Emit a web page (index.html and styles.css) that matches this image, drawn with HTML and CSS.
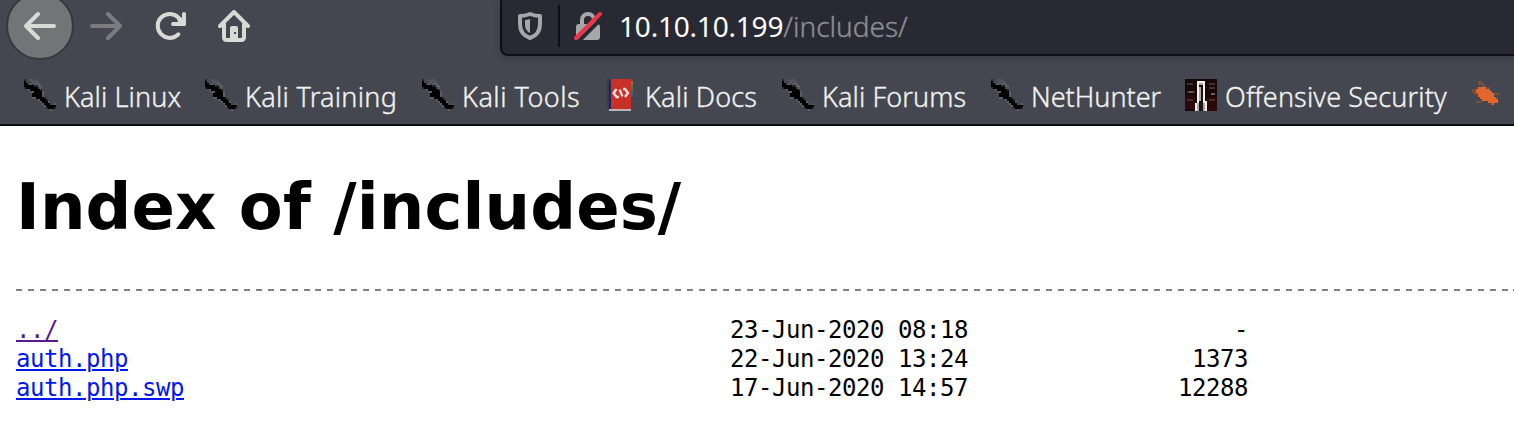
FILE: index.html
```html
<!DOCTYPE html>
<html lang="en">
<head>
<meta charset="utf-8">
<title>Index of /includes/</title>
<link rel="stylesheet" href="styles.css">
</head>
<body>
<svg class="defs" width="0" height="0" aria-hidden="true">
  <symbol id="kali" viewBox="0 0 16 16" shape-rendering="crispEdges">
    <path fill="#5a5d64" d="M3 0h1v1h-1zM5 0h1v1h-1zM4 1h1v1h-1zM6 1h1v1h-1zM3 2h1v1h-1zM5 2h3v1h-3zM7 3h2v1h-2zM8 4h1v1h-1zM2 5h1v1h-1zM3 6h2v1h-2zM9 6h1v3h-1zM4 9h2v1h-2zM7 10h1v1h-1zM8 11h1v1h-1zM9 12h1v1h-1zM10 13h1v1h-1zM12 11h1v1h-1zM15 12h1v1h-1zM13 15h1v1h-1z"/>
    <path fill="#26272b" d="M0 0h1v1h-1zM0 4h1v1h-1zM5 3h2v1h-2zM8 5h1v1h-1zM10 9h1v1h-1zM11 10h1v1h-1zM11 14h1v1h-1zM15 14h1v1h-1z"/>
    <path fill="#000" d="M0 1h1v1h-1zM0 2h2v1h-2zM0 3h5v1h-5zM1 4h6v1h-6zM3 5h5v1h-5zM5 6h4v1h-4zM4 7h5v1h-5zM4 8h5v1h-5zM6 9h4v1h-4zM8 10h3v1h-3zM9 11h3v1h-3zM10 12h3v1h-3zM11 13h5v1h-5zM12 14h3v1h-3z"/>
  </symbol>
</svg>
<header class="browser">
  <div class="toolbar">
    <div class="back"><svg width="32" height="32" viewBox="0 0 32 32"><path d="M30 16H2M14 4L2 16l12 12"/></svg></div>
    <svg class="forward" width="32" height="32" viewBox="0 0 32 32"><path d="M2 16h28M18 4l12 12-12 12"/></svg>
    <svg class="reload" width="32" height="32" viewBox="0 0 32 32"><path d="M24.3 24.3A12 12 0 1 1 24.8 8"/><path class="solid" d="M28 4a2 2 0 0 1 4 0V14.5a1.5 1.5 0 0 1-1.5 1.5H19a2 2 0 0 1 0-4H24l-1-3 2-3 3 2z"/></svg>
    <svg class="home" width="32" height="32" viewBox="0 0 32 32"><path d="M2 16L16 2l14 14M6 14v13q0 3 3 3h14q3 0 3-3V14"/><path class="solid" fill-rule="evenodd" d="M12 30V18q0-2 2-2h4q2 0 2 2v12zM16 22v2h2v-2z"/></svg>
    <div class="urlbar">
      <svg class="shield" width="24" height="28" viewBox="0 0 24 28"><path d="M12 2Q17 4 22 4V12C22 19 18 24 12 26C6 24 2 19 2 12V4Q7 4 12 2Z"/><path class="solid" d="M12 7v14C8 19 7 15 7 12V8Q10 8 12 7Z"/></svg>
      <span class="divider"></span>
      <svg class="lock" width="28" height="28" viewBox="0 0 28 28"><path class="shackle" d="M8 14V8a6 6 0 0 1 12 0v6"/><rect class="case" x="2" y="12" width="24" height="16" rx="3"/><path class="gap" d="M5 29L29 5"/><path class="slash" d="M2 26L26 2"/></svg>
      <span class="url"><span class="host">10.10.10.199</span><span class="path">/includes/</span></span>
    </div>
  </div>
  <nav class="bookmarks">
    <span class="bm linux"><svg width="32" height="32"><use href="#kali"/></svg><span>Kali Linux</span></span>
    <span class="bm training"><svg width="32" height="32"><use href="#kali"/></svg><span>Kali Training</span></span>
    <span class="bm tools"><svg width="32" height="32"><use href="#kali"/></svg><span>Kali Tools</span></span>
    <span class="bm docs"><svg width="32" height="32" viewBox="0 0 16 16" shape-rendering="crispEdges"><path fill="#3b3751" d="M1 0h2v15h-2z"/><path fill="#17295c" d="M2 1h1v14h-1z"/><path fill="#c83028" d="M3 0h10v15h-10z"/><path fill="#b9b4b5" d="M2 15h11v1h-11z"/><path fill="#a66a35" d="M13 1h1v2h-1z"/><path fill="#3d7d50" d="M13 3h1v3h-1z"/><path fill="#345e98" d="M13 6h1v3h-1z"/><path shape-rendering="auto" d="M5.8 5L4.3 7l1.5 2H7M9 5h1l1.5 2-1.5 2M7.3 5.3L8.7 8.7" fill="none" stroke="#f1dcdb" stroke-width="1.2"/></svg><span>Kali Docs</span></span>
    <span class="bm forums"><svg width="32" height="32"><use href="#kali"/></svg><span>Kali Forums</span></span>
    <span class="bm nethunter"><svg width="32" height="32"><use href="#kali"/></svg><span>NetHunter</span></span>
    <span class="bm offsec"><svg width="32" height="32" viewBox="0 0 16 16" shape-rendering="crispEdges"><path fill="#170707" d="M0 0h16v16H0z"/><path fill="#2a0908" d="M0 8h5v7H0zM11 9h5v7h-5z"/><path fill="#40302f" d="M1 2h3v1H1zM12 2h3v1h-3zM1 6h4v1H1zM12 4h3v1h-3zM1 10h3v1H1zM12 10h3v1h-3z"/><path fill="#6a5d5d" d="M2 6h2v1H2zM13 7h2v1h-2z"/><path fill="#f4efee" d="M6 1h4v10h1v5h-1v-4h-1V2H7v10H6v4H5v-4h1z"/><path fill="#aaa5a4" d="M7 2h2v1H7zM7 4h1v7H7zM6 12h1v4H6zM9 12h1v4H9z"/><path fill="#1c1717" d="M8 4h1v7H8zM7 12h2v4H7z"/></svg><span>Offensive Security</span></span>
    <svg class="bug" width="32" height="32" viewBox="0 0 16 16" shape-rendering="crispEdges"><path fill="#74503f" d="M4 1h2v1h1v1h1v1H6V3H4zM1 5h2v1h1v2H2V7H1zM11 7h4v1h-4zM3 11h3v1H3zM10 12h1v1h-1zM5 4h5v1H5zM12 9h2v2h-2z"/><path fill="#e2672c" d="M4 4h4v1h2v1h1v1h1v2h1v1h1v2h-2v1h-1v-1h-2v-1H6v-1H5V9H4V7H3V5h1z"/></svg>
  </nav>
</header>
<main class="page">
  <h1>Index of /includes/</h1>
  <div class="rule"></div>
  <div class="listing">
    <a class="visited" href="#">../</a><span>23-Jun-2020 08:18</span><span class="size">-</span>
    <a href="#">auth.php</a><span>22-Jun-2020 13:24</span><span class="size">1373</span>
    <a href="#">auth.php.swp</a><span>17-Jun-2020 14:57</span><span class="size">12288</span>
  </div>
</main>
</body>
</html>
```
FILE: styles.css
```css
* { box-sizing: border-box; }
body { margin: 0; background: #fff; width: 1514px; height: 426px; overflow: hidden; }
svg { display: block; flex: none; }
.defs { height: 0; }
.browser { height: 126px; background: #44474f; border-bottom: 2px solid #0d0e13; overflow: hidden; font-family: "Noto Sans", sans-serif; font-size: 27px; font-weight: 300; color: #f1f1ef; -webkit-text-stroke: .35px currentColor; }
.toolbar { height: 68px; display: flex; align-items: flex-start; }
.toolbar svg { fill: none; stroke: #d9d9d6; stroke-width: 4; stroke-linecap: round; stroke-linejoin: round; }
.toolbar svg .solid { fill: #d9d9d6; stroke: none; }
.back { width: 68px; height: 68px; margin: -8px 0 0 6px; border-radius: 50%; border: 2px solid #36383d; background: #737477; display: flex; align-items: center; justify-content: center; flex: none; }
.toolbar .forward { margin: 10px 0 0 16px; stroke: #7b7c80; }
.reload { margin: 10px 0 0 32px; }
.home { margin: 10px 0 0 32px; }
.urlbar { margin: -6px 0 0 250px; height: 62px; flex: 1; background: #282a33; border: 2px solid #0e1016; border-right: 0; border-radius: 8px 0 0 8px; box-shadow: 0 2px 6px #0003; display: flex; align-items: center; padding: 2px 0 0 16px; }
.toolbar .shield { stroke: #a6a7aa; }
.toolbar .shield .solid { fill: #a6a7aa; }
.divider { width: 2px; height: 42px; background: #0e1016; margin: -1px 14px 0 16px; }
.lock .shackle { stroke: #a6a7aa; }
.lock .case { fill: #a6a7aa; stroke: none; }
.lock .gap { stroke: #282a33; }
.lock .slash { stroke: #ef3347; }
.url { margin: 0 0 0 17px; white-space: pre; font-size: 28px; }
.host { color: #fff; letter-spacing: -.2px; font-weight: 400; -webkit-text-stroke: 0; }
.path { color: #8c8d92; letter-spacing: 0; }
.bookmarks { height: 56px; display: flex; align-items: center; padding: 0 0 4px 24px; margin-top: 1px; }
.bm { display: flex; align-items: center; gap: 8px; flex: none; white-space: nowrap; }
.bm span { padding-top: 2px; }
.linux { width: 181px; letter-spacing: .12px; }
.training { width: 217px; letter-spacing: .28px; }
.tools { width: 183px; letter-spacing: .5px; }
.docs { width: 177px; letter-spacing: .17px; }
.forums { width: 209px; letter-spacing: .1px; }
.nethunter { width: 194px; letter-spacing: 0; }
.offsec { width: 285px; letter-spacing: .14px; }
.page { padding: 43px 0 0 16px; }
h1 { margin: 0; font: bold 64px/76px "DejaVu Sans", sans-serif; letter-spacing: .11px; }
.rule { height: 2px; margin-top: 44px; background: repeating-linear-gradient(90deg, #808080 0 6px, transparent 6px 11.98px); }
.listing { display: grid; grid-template-columns: 714px 238px 280px; grid-auto-rows: 29px; margin-top: 25px; font: 24px/29px "DejaVu Sans Mono", monospace; letter-spacing: -.449px; color: #000; white-space: pre; }
.listing a { color: #0018ee; justify-self: start; text-decoration-thickness: 2px; text-underline-offset: 2px; }
.listing .visited { color: #551a8b; }
.size { text-align: right; }
```
